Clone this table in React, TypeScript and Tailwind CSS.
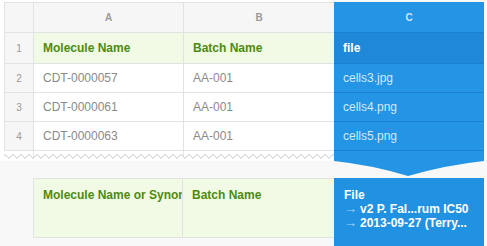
import React from 'react';

const rows = [
  { n: 2, a: 'CDT-0000057', b: 'AA-001', c: 'cells3.jpg' },
  { n: 3, a: 'CDT-0000061', b: 'AA-001', c: 'cells4.png' },
  { n: 4, a: 'CDT-0000063', b: 'AA-001', c: 'cells5.png' },
];

function Zigzag() {
  // torn edge under the left part of the sheet
  const w = 330;
  let pts = '0,5';
  for (let x = 1; x <= w; x += 8) {
    pts += ` ${x},3 ${x + 4},7`;
  }
  return (
    <svg width={w} height={10} className="block">
      <polygon points={`0,0 ${w},0 ${w},5 ${pts.split(' ').reverse().join(' ')}`} fill="#ffffff" />
      <line x1={29.5} y1={0} x2={29.5} y2={6} stroke="#e3e3e3" />
      <line x1={179.5} y1={0} x2={179.5} y2={6} stroke="#e3e3e3" />
      <polyline points={pts} fill="none" stroke="#d9d9d9" strokeWidth={1} />
      <polyline points={pts.split(' ').map(p => { const [x, y] = p.split(','); return `${x},${+y + 1}`; }).join(' ')} fill="none" stroke="#ececec" strokeWidth={1} />
    </svg>
  );
}

export default function App() {
  return (
    <div className="w-[487px] h-[246px] overflow-hidden bg-[#f8f8f8] font-['Liberation_Sans',Arial,sans-serif]">
      <div className="flex items-start bg-[#f8f8f8]">
        {/* left sheet */}
        <div className="flex flex-col bg-white pl-[4px] pt-[2px]">
          <div className="flex h-[31px] border-y border-[#e2e2e2] bg-[#f6f6f6] text-[10px] font-bold text-[#9a9a9a]">
            <div className="w-[30px] border-x border-[#e2e2e2]" />
            <div className="w-[150px] border-r border-[#e2e2e2] flex items-center justify-center">A</div>
            <div className="w-[150px] flex items-center justify-center">B</div>
          </div>
          <div className="flex h-[31px] border-b border-[#e2e2e2]">
            <div className="w-[30px] border-x border-[#e2e2e2] bg-[#f6f6f6] flex items-center justify-center text-[10px] text-[#999]">1</div>
            <div className="w-[150px] border-r border-[#e2e2e2] bg-[#f1fae4] flex items-center px-[9px] text-[12px] font-bold text-[#4e8a12]">Molecule Name</div>
            <div className="w-[150px] bg-[#f1fae4] flex items-center px-[9px] text-[12px] font-bold text-[#4e8a12]">Batch Name</div>
          </div>
          {rows.map(r => (
            <div key={r.n} className="flex h-[29px] border-b border-[#e2e2e2]">
              <div className="w-[30px] border-x border-[#e2e2e2] bg-[#f6f6f6] flex items-center justify-center text-[10px] text-[#999]">{r.n}</div>
              <div className="w-[150px] border-r border-[#e2e2e2] flex items-center px-[9px] text-[12px] text-[#8a8a8a]">{r.a}</div>
              <div className="w-[150px] flex items-center px-[9px] text-[12px] text-[#8a8a8a]">{r.b}</div>
            </div>
          ))}
          <Zigzag />
        </div>

        {/* selected column C */}
        <div className="flex flex-col w-[150px] mt-[2px]">
          <div className="h-[31px] bg-[#2494e4] border-b border-[#1c80cc] flex items-center justify-center text-[10px] font-bold text-[#cfe6f9]">C</div>
          <div className="h-[31px] bg-[#1f88d9] border-b border-[#1c80cc] flex items-center px-[9px] text-[12px] font-bold text-white">file</div>
          {rows.map(r => (
            <div key={r.n} className="h-[29px] bg-[#2494e4] border-b border-[#1c80cc] flex items-center px-[9px] text-[12px] text-[#d3e9fb]">{r.c}</div>
          ))}
          <div className="h-[10px] bg-[#2494e4]" />
          <svg width={150} height={16} className="block">
            <path d="M0 0 H150 Q112 4 74 15 Q38 4 0 0 Z" fill="#2494e4" />
          </svg>
        </div>
      </div>

      {/* mapping row */}
      <div className="flex pl-[33px] mt-[1px]">
        <div className="flex w-[301px] h-[60px] border border-r-0 border-[#e2e2e2] bg-[#f1fae4] text-[12px] font-bold text-[#4e8a12] leading-[14px]">
          <div className="w-[149px] border-r border-[#e2e2e2] px-[9px] pt-[9px] overflow-hidden whitespace-nowrap">Molecule Name or Synonym</div>
          <div className="w-[150px] px-[9px] pt-[9px] overflow-hidden whitespace-nowrap">Batch Name</div>
        </div>
        <div className="w-[150px] h-[70px] bg-[#2191e2] px-[10px] pt-[10px] text-[12px] font-bold text-white leading-[14px] whitespace-nowrap overflow-hidden">
          <div>File</div>
          <div className="flex gap-[3px]"><span className="font-normal text-[13px] leading-[14px] text-[#a9d5f7]">→</span><span>v2 P. Fal...rum IC50</span></div>
          <div className="flex gap-[3px]"><span className="font-normal text-[13px] leading-[14px] text-[#a9d5f7]">→</span><span>2013-09-27 (Terry...</span></div>
        </div>
      </div>
    </div>
  );
}
